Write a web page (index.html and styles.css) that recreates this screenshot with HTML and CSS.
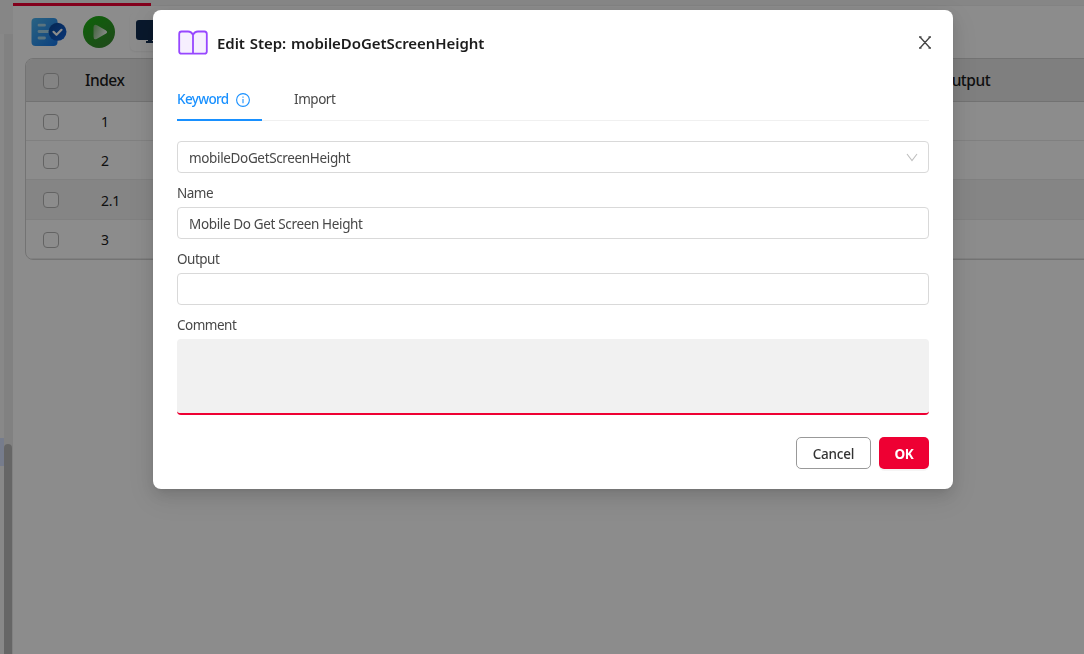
FILE: index.html
```html
<!DOCTYPE html>
<html lang="en">
<head>
<meta charset="utf-8">
<title>Edit Step</title>
<link rel="stylesheet" href="styles.css">
</head>
<body>
<div class="app">
  <aside class="side">
    <div class="side-list"><div class="side-selected"></div></div>
    <div class="scroll-track"><div class="scroll-thumb"></div></div>
  </aside>
  <main class="workspace">
    <div class="tabbar"><div class="tab-active"></div></div>
    <div class="toolbar">
      <svg class="tool" width="36" height="30" viewBox="0 0 36 30">
        <defs><linearGradient id="doc" x1="0" y1="0" x2="1" y2="1"><stop offset="0" stop-color="#4cb4ee"/><stop offset="1" stop-color="#1676e8"/></linearGradient>
        <linearGradient id="badge" x1="0" y1="0" x2="1" y2="1"><stop offset="0" stop-color="#0a4794"/><stop offset="1" stop-color="#1162dc"/></linearGradient></defs>
        <rect x="0.500" y="1" width="26" height="28" rx="4" fill="url(#doc)"/>
        <path d="M8 8.200h5.500M8 14.500h9M8 21h5.500" stroke="#a5d3e8" stroke-width="2.800" stroke-linecap="round"/>
        <circle cx="26.500" cy="14.800" r="9" fill="url(#badge)"/>
        <path d="M22.500 14.800l3 3 5-5" fill="none" stroke="#fff" stroke-width="2.200" stroke-linecap="round" stroke-linejoin="round"/>
      </svg>
      <svg class="tool play" width="32" height="32" viewBox="0 0 32 32">
        <defs><linearGradient id="green" x1="0" y1="0" x2="0.700" y2="1"><stop offset="0" stop-color="#19b410"/><stop offset="1" stop-color="#38892f"/></linearGradient>
        <linearGradient id="tri" x1="0" y1="0.300" x2="1" y2="0.700"><stop offset="0" stop-color="#86bb7d"/><stop offset="1" stop-color="#fff"/></linearGradient></defs>
        <circle cx="16" cy="16" r="16" fill="url(#green)"/>
        <path d="M10.500 11.500q0-4 3.500-2.300l8.700 5q2.800 1.800 0 3.600l-8.700 5q-3.500 1.700-3.500-2.300z" fill="url(#tri)"/>
      </svg>
      <div class="tool monitor">
        <svg width="30" height="26" viewBox="0 0 30 26"><rect x="0" y="0" width="28" height="20" rx="3" fill="#102c50"/><path d="M12 19h4v2h3v2H10v-2h2z" fill="#102c50"/></svg>
      </div>
    </div>
    <div class="table">
      <div class="row head"><i class="check"></i><span class="index">Index</span><span class="output">Output</span></div>
      <div class="row r1"><i class="check"></i><span class="index">1</span></div>
      <div class="row r2"><i class="check"></i><span class="index">2</span></div>
      <div class="row r3"><i class="check"></i><span class="index">2.1</span></div>
      <div class="row r4"><i class="check"></i><span class="index">3</span></div>
    </div>
  </main>
</div>
<div class="mask">
  <section class="modal">
    <header class="title">
      <svg width="32" height="28" viewBox="0 0 32 28" fill="#f6effe" stroke="#9747ff" stroke-width="1.800" stroke-linejoin="round"><path d="M16 6Q14.500 2.500 11 2.500H4.500Q2.200 2.500 2.200 5V22.500Q2.200 24.700 4.500 24.700H27.500Q29.800 24.700 29.800 22.500V5Q29.800 2.500 27.500 2.500H21Q17.500 2.500 16 6V24.500"/></svg>
      <h1>Edit Step: mobileDoGetScreenHeight</h1>
      <svg class="close" width="12" height="14" viewBox="0 0 12 14" fill="none" stroke="#444" stroke-width="1.300"><path d="M1 1L11 12M11 1L1 12M0 1h2.500M9.500 1H12M0 12h2.500M9.500 12H12"/></svg>
    </header>
    <nav class="tabs">
      <div class="tab on"><span>Keyword</span>
        <svg width="14" height="14" viewBox="0 0 14 14" fill="none" stroke="#1890ff" stroke-width="1.100"><circle cx="7" cy="7" r="6.400"/><path d="M7 6v4.300M7 3.500v1.200"/></svg>
      </div>
      <div class="tab import"><span>Import</span></div>
    </nav>
    <div class="field select"><span>mobileDoGetScreenHeight</span>
      <svg width="12" height="10" viewBox="0 0 12 10" fill="none" stroke="#bfbfbf" stroke-width="1.100"><path d="M1 1L6 7.500L11 1"/></svg>
    </div>
    <label>Name</label>
    <div class="field"><span>Mobile Do Get Screen Height</span></div>
    <label>Output</label>
    <div class="field"></div>
    <label>Comment</label>
    <div class="comment"></div>
    <footer class="actions">
      <button class="btn cancel">Cancel</button>
      <button class="btn ok">OK</button>
    </footer>
  </section>
</div>
</body>
</html>
```
FILE: styles.css
```css
* { box-sizing: border-box; }
body { margin: 0; width: 1084px; height: 654px; overflow: hidden; background: #fff; font: 14px/22px "Noto Sans", sans-serif; color: #1c1c1c; }
.app { display: flex; height: 654px; }
.side { display: flex; width: 13px; background: #f5f5f5; padding-top: 34px; }
.side-list { width: 4px; background: #f8f8f8; padding-top: 404px; }
.side-selected { height: 28px; background: #d8e2ff; }
.scroll-track { width: 9px; background: #ececec; padding-top: 410px; }
.scroll-thumb { width: 8px; height: 220px; border-radius: 4px 4px 0 0; background: #bababa; }
.workspace { flex: 1; min-width: 0; }
.tabbar { height: 6px; padding-top: 3px; background: #f5f5f5; border-bottom: 1px solid #efefef; }
.tab-active { width: 138px; height: 3px; background: #ee0033; }
.toolbar { display: flex; align-items: center; height: 52px; padding-left: 18px; }
.play { margin-left: 16px; }
.monitor { margin-left: 15px; height: 38px; width: 44px; padding: 7px 6px; border-radius: 5px; box-shadow: 0 1px 2px #f0f0f0; }
.table { width: 1100px; margin-left: 12px; border: 1px solid #d2d2d2; border-radius: 8px; overflow: hidden; }
.row { display: flex; align-items: center; height: 39px; padding: 2px 0 0 17px; border-bottom: 1px solid #eaeaea; }
.head { height: 43px; background: #e8e8e8; border-bottom-color: #d0d0d0; font-size: 15.500px; font-weight: 500; letter-spacing: -.5px; padding-top: 0; }
.r3 { background: #f3f3f3; height: 40px; padding-top: 1px; }
.check { width: 16px; height: 16px; border: 1px solid #b5b5b5; border-radius: 4px; background: #fff; }
.head .check { background: #f0f0f0; margin-top: 2px; }
.row .index { margin-left: 42px; }
.r3 .index { padding-top: 2px; letter-spacing: -.3px; }
.head .index { margin-left: 26px; width: 855px; }
.mask { position: fixed; inset: 0; padding: 10px 0 0 153px; background: rgba(0,0,0,.45); }
.modal { width: 800px; height: 479px; padding: 16px 24px; background: #fff; border-radius: 8px; box-shadow: 0 6px 16px rgba(0,0,0,.12), 0 3px 6px -4px rgba(0,0,0,.12), 0 9px 28px 8px rgba(0,0,0,.06); color: #484848; font-size: 13.500px; letter-spacing: -.35px; }
.title { display: flex; align-items: center; height: 34px; }
.title h1 { margin: 0 0 0 8px; font-size: 15px; font-weight: 600; letter-spacing: -.06px; word-spacing: 1px; color: #1c1c1c; }
.close { margin: 0 -2px 1px auto; }
.tabs { display: flex; height: 61px; margin-bottom: 20px; border-bottom: 1px solid #f0f0f0; padding-top: 18px; gap: 32px; letter-spacing: -.45px; }
.tab { height: 43px; padding-top: 10px; }
.tab.on { display: flex; justify-content: space-between; width: 85px; padding-right: 12px; color: #1890ff; font-weight: 500; letter-spacing: -.65px; border-bottom: 2px solid #1890ff; }
.tab svg { margin-top: 5px; }
.field { display: flex; align-items: center; height: 32px; padding: 2px 11px 0; border: 1px solid #d9d9d9; border-radius: 4px; }
.select { justify-content: space-between; padding-right: 10px; }
label { display: flex; align-items: center; height: 34px; padding-top: 6px; letter-spacing: -.5px; }
.comment { height: 76px; background: #f1f1f1; border-radius: 4px; border-bottom: 2px solid #ee0033; }
.actions { display: flex; justify-content: flex-end; gap: 8px; margin-top: 22px; }
.btn { height: 32px; border-radius: 5px; font: 500 13.500px "Noto Sans", sans-serif; padding: 1px 0 0; letter-spacing: -.2px; }
.cancel { width: 75px; background: #fff; border: 1px solid #999; color: #333; }
.ok { width: 50px; border: 0; background: #ee0033; color: #fff; font-weight: 700; box-shadow: 0 2px 0 rgba(0,0,0,.04); }
```
